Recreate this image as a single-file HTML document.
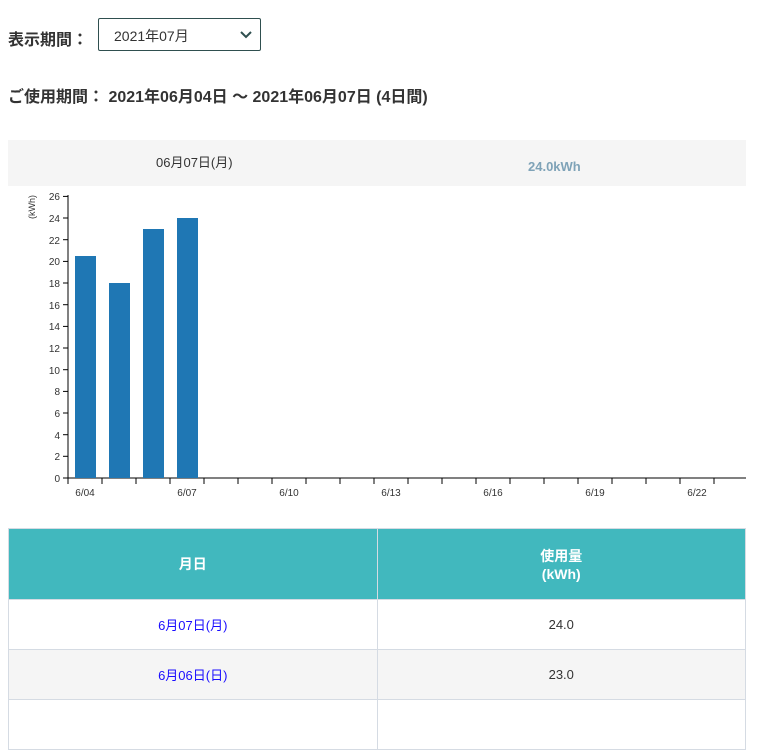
<!DOCTYPE html>
<html><head><meta charset="utf-8"><style>
body{margin:0;width:770px;height:704px;overflow:hidden;background:#fff;font-family:"Liberation Sans","Noto Sans CJK JP",sans-serif;color:#333;}
.abs{position:absolute}
.sel{left:98px;top:18px;width:163px;height:33px;border:1px solid #2f4f4f;border-radius:2px;box-sizing:border-box;font-size:14px;color:#333}
table{position:absolute;left:8px;top:528px;width:738px;border-collapse:collapse;font-size:13px}
td{border:1px solid #d5dbe3;text-align:center}
th{background:#41b8be;color:#fff;font-weight:bold;border:1px solid #d5dbe3;height:68px;font-size:14px}
</style></head><body>
<div class="abs" style="left:8px;top:26px;font-size:16px;font-weight:bold;color:#333">表示期間：</div>
<div class="abs sel"><span class="abs" style="left:15px;top:7px">2021年07月</span>
<svg class="abs" style="left:140px;top:11px" width="14" height="10"><path d="M2 2 L7 7 L12 2" stroke="#2f4f4f" stroke-width="2" fill="none"/></svg></div>
<div class="abs" style="left:8px;top:83px;font-size:16px;font-weight:bold;color:#333">ご使用期間： 2021年06月04日 〜 2021年06月07日 (4日間)</div>
<div class="abs" style="left:8px;top:140px;width:738px;height:46px;background:#f5f5f5"></div>
<div class="abs" style="left:156px;top:152px;font-size:13px">06月07日(月)</div>
<div class="abs" style="left:528px;top:159px;font-size:13px;font-weight:bold;color:#7fa3b8">24.0kWh</div>
<svg class="abs" style="left:0;top:186px" width="770" height="320">
<g transform="translate(0,-186)" font-family="Liberation Sans, sans-serif" font-size="10" fill="#333">
<text transform="translate(35,207) rotate(-90)" text-anchor="middle" font-size="9">(kWh)</text>
<line x1="68" y1="195" x2="68" y2="478" stroke="#000"/>
<line x1="68" y1="478" x2="746" y2="478" stroke="#000"/>
<g stroke="#000">
<line x1="63" y1="478" x2="68" y2="478"/><line x1="63" y1="456.3" x2="68" y2="456.3"/><line x1="63" y1="434.7" x2="68" y2="434.7"/><line x1="63" y1="413" x2="68" y2="413"/><line x1="63" y1="391.4" x2="68" y2="391.4"/><line x1="63" y1="369.7" x2="68" y2="369.7"/><line x1="63" y1="348" x2="68" y2="348"/><line x1="63" y1="326.4" x2="68" y2="326.4"/><line x1="63" y1="304.7" x2="68" y2="304.7"/><line x1="63" y1="283" x2="68" y2="283"/><line x1="63" y1="261.4" x2="68" y2="261.4"/><line x1="63" y1="239.7" x2="68" y2="239.7"/><line x1="63" y1="218" x2="68" y2="218"/><line x1="63" y1="196.4" x2="68" y2="196.4"/>
<line x1="68" y1="478" x2="68" y2="484"/><line x1="102" y1="478" x2="102" y2="484"/><line x1="136" y1="478" x2="136" y2="484"/><line x1="170" y1="478" x2="170" y2="484"/><line x1="204" y1="478" x2="204" y2="484"/><line x1="238" y1="478" x2="238" y2="484"/><line x1="272" y1="478" x2="272" y2="484"/><line x1="306" y1="478" x2="306" y2="484"/><line x1="340" y1="478" x2="340" y2="484"/><line x1="374" y1="478" x2="374" y2="484"/><line x1="408" y1="478" x2="408" y2="484"/><line x1="442" y1="478" x2="442" y2="484"/><line x1="476" y1="478" x2="476" y2="484"/><line x1="510" y1="478" x2="510" y2="484"/><line x1="544" y1="478" x2="544" y2="484"/><line x1="578" y1="478" x2="578" y2="484"/><line x1="612" y1="478" x2="612" y2="484"/><line x1="646" y1="478" x2="646" y2="484"/><line x1="680" y1="478" x2="680" y2="484"/><line x1="714" y1="478" x2="714" y2="484"/>
</g>
<g text-anchor="end">
<text x="60" y="482">0</text><text x="60" y="460">2</text><text x="60" y="439">4</text><text x="60" y="417">6</text><text x="60" y="395">8</text><text x="60" y="374">10</text><text x="60" y="352">12</text><text x="60" y="330">14</text><text x="60" y="309">16</text><text x="60" y="287">18</text><text x="60" y="265">20</text><text x="60" y="244">22</text><text x="60" y="222">24</text><text x="60" y="200">26</text>
</g>
<g text-anchor="middle">
<text x="85" y="496">6/04</text><text x="187" y="496">6/07</text><text x="289" y="496">6/10</text><text x="391" y="496">6/13</text><text x="493" y="496">6/16</text><text x="595" y="496">6/19</text><text x="697" y="496">6/22</text>
</g>
<g fill="#1f77b4">
<rect x="75" y="256" width="21" height="222"/><rect x="109" y="283" width="21" height="195"/><rect x="143" y="229" width="21" height="249"/><rect x="177" y="218" width="21" height="260"/>
</g>
</g></svg>
<table>
<tr><th style="width:50%">月日</th><th>使用量<br>(kWh)</th></tr>
<tr style="height:50px"><td style="color:#1a0dff">6月07日(月)</td><td>24.0</td></tr>
<tr style="height:50px;background:#f5f5f5"><td style="color:#1a0dff">6月06日(日)</td><td>23.0</td></tr>
<tr style="height:50px"><td></td><td></td></tr>
</table>
</body></html>
